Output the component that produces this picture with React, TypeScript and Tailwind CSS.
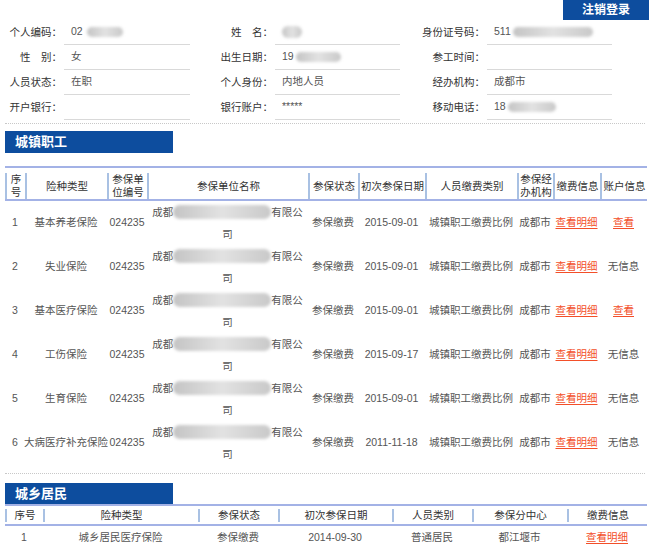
import React from 'react';

const font = "font-['Liberation_Sans','Noto_Sans_CJK_SC',sans-serif]";

// redaction blob used where the screenshot is blurred
const Blur = ({ w, h = 10, className = '' }: { w: number; h?: number; className?: string }) => (
  <span
    className={`inline-block rounded-full bg-gradient-to-r from-[#c4c4c4] via-[#e2e2e2] to-[#c9c9c9] blur-[1.5px] align-middle ${className}`}
    style={{ width: w, height: h }}
  />
);

const InfoLabel = ({ children }: { children: React.ReactNode }) => (
  <div className="h-[25px] flex items-center justify-end pr-[2px] text-[#333] whitespace-nowrap">{children}</div>
);

const InfoValue = ({ children }: { children?: React.ReactNode }) => (
  <div className="h-[25px] flex items-center pl-[7px] border-b border-[#d9d9d9] text-[#555] whitespace-nowrap">
    {children}
  </div>
);

const SectionBar = ({ title }: { title: string }) => (
  <div className="ml-[5px] w-[168px] bg-[#0d4d9e] text-white font-bold text-[13px] flex items-center pl-[10px]">
    {title}
  </div>
);

const Th = ({ children }: { children: React.ReactNode }) => (
  <div className="h-full w-full flex items-center justify-center text-center whitespace-nowrap leading-[13px] text-[#333] border-l-2 border-[#a9c1e3]">
    <div>{children}</div>
  </div>
);

const Link = ({ children }: { children: React.ReactNode }) => (
  <span className="text-[#f34f29] underline underline-offset-2">{children}</span>
);

type Row = { no: number; type: string; date: string; account: boolean };

const workerRows: Row[] = [
  { no: 1, type: '基本养老保险', date: '2015-09-01', account: true },
  { no: 2, type: '失业保险', date: '2015-09-01', account: false },
  { no: 3, type: '基本医疗保险', date: '2015-09-01', account: true },
  { no: 4, type: '工伤保险', date: '2015-09-17', account: false },
  { no: 5, type: '生育保险', date: '2015-09-01', account: false },
  { no: 6, type: '大病医疗补充保险', date: '2011-11-18', account: false },
];

const grid1 = 'grid grid-cols-[20px_82px_40px_161px_50px_67px_92px_36px_47px_47px]';
const grid2 = 'grid grid-cols-[38px_155px_80px_114px_80px_95px_80px]';

export default function App() {
  return (
    <div className={`w-[650px] h-[560px] bg-white text-[10.5px] overflow-hidden ${font}`}>
      {/* top bar */}
      <div className="h-[20px] flex justify-end">
        <button className="w-[86px] h-[20px] mr-[1px] bg-[#0d4d9e] text-white text-[12px] font-bold">注销登录</button>
      </div>

      {/* personal info */}
      <div className="grid grid-cols-[64px_126px_85px_125px_87px_125px]">
        <InfoLabel>个人编码：</InfoLabel>
        <InfoValue>
          <span>02</span>
          <Blur w={36} className="ml-[4px]" />
        </InfoValue>
        <InfoLabel>姓　名：</InfoLabel>
        <InfoValue>
          <Blur w={20} h={12} />
        </InfoValue>
        <InfoLabel>身份证号码：</InfoLabel>
        <InfoValue>
          <span>511</span>
          <Blur w={80} className="ml-[2px]" />
        </InfoValue>

        <InfoLabel>性　别：</InfoLabel>
        <InfoValue>女</InfoValue>
        <InfoLabel>出生日期：</InfoLabel>
        <InfoValue>
          <span>19</span>
          <Blur w={45} className="ml-[2px]" />
        </InfoValue>
        <InfoLabel>参工时间：</InfoLabel>
        <InfoValue />

        <InfoLabel>人员状态：</InfoLabel>
        <InfoValue>在职</InfoValue>
        <InfoLabel>个人身份：</InfoLabel>
        <InfoValue>内地人员</InfoValue>
        <InfoLabel>经办机构：</InfoLabel>
        <InfoValue>成都市</InfoValue>

        <InfoLabel>开户银行：</InfoLabel>
        <InfoValue />
        <InfoLabel>银行账户：</InfoLabel>
        <InfoValue>*****</InfoValue>
        <InfoLabel>移动电话：</InfoLabel>
        <InfoValue>
          <span>18</span>
          <Blur w={48} className="ml-[2px]" />
        </InfoValue>
      </div>

      <div className="mt-[3px] mx-[5px] border-t border-dotted border-[#c8c8c8]" />

      {/* 城镇职工 */}
      <div className="mt-[7px] h-[22px] flex">
        <SectionBar title="城镇职工" />
      </div>

      <div className="mt-[13px] ml-[5px] w-[642px]">
        <div className={`${grid1} h-[35px] border-y-2 border-[#a3b2e6] py-[5px]`}>
          <Th>
            序<br />号
          </Th>
          <Th>险种类型</Th>
          <Th>
            参保单<br />位编号
          </Th>
          <Th>参保单位名称</Th>
          <Th>参保状态</Th>
          <Th>初次参保日期</Th>
          <Th>人员缴费类别</Th>
          <Th>
            参保经<br />办机构
          </Th>
          <Th>缴费信息</Th>
          <Th>账户信息</Th>
        </div>

        {workerRows.map((r) => (
          <div key={r.no} className={`${grid1} h-[44px] items-center text-[#555] text-center whitespace-nowrap`}>
            <div>{r.no}</div>
            <div className="flex justify-center">{r.type}</div>
            <div>024235</div>
            <div className="flex flex-col items-center leading-[22px]">
              <div className="flex items-center">
                <span>成都</span>
                <Blur w={98} h={14} />
                <span>有限公</span>
              </div>
              <div>司</div>
            </div>
            <div>参保缴费</div>
            <div>{r.date}</div>
            <div>城镇职工缴费比例</div>
            <div>成都市</div>
            <div>
              <Link>查看明细</Link>
            </div>
            <div>{r.account ? <Link>查看</Link> : '无信息'}</div>
          </div>
        ))}
      </div>

      <div className="mt-[8px] mx-[5px] border-t border-dotted border-[#c8c8c8]" />

      {/* 城乡居民 */}
      <div className="mt-[9px] h-[21px] flex">
        <SectionBar title="城乡居民" />
      </div>

      <div className="ml-[5px] w-[642px]">
        <div className={`${grid2} h-[22px] border-y-2 border-[#a3b2e6] py-[3px]`}>
          <Th>序号</Th>
          <Th>险种类型</Th>
          <Th>参保状态</Th>
          <Th>初次参保日期</Th>
          <Th>人员类别</Th>
          <Th>参保分中心</Th>
          <Th>缴费信息</Th>
        </div>
        <div className={`${grid2} h-[24px] items-center text-[#555] text-center whitespace-nowrap`}>
          <div>1</div>
          <div>城乡居民医疗保险</div>
          <div>参保缴费</div>
          <div>2014-09-30</div>
          <div>普通居民</div>
          <div>都江堰市</div>
          <div>
            <Link>查看明细</Link>
          </div>
        </div>
      </div>
    </div>
  );
}
